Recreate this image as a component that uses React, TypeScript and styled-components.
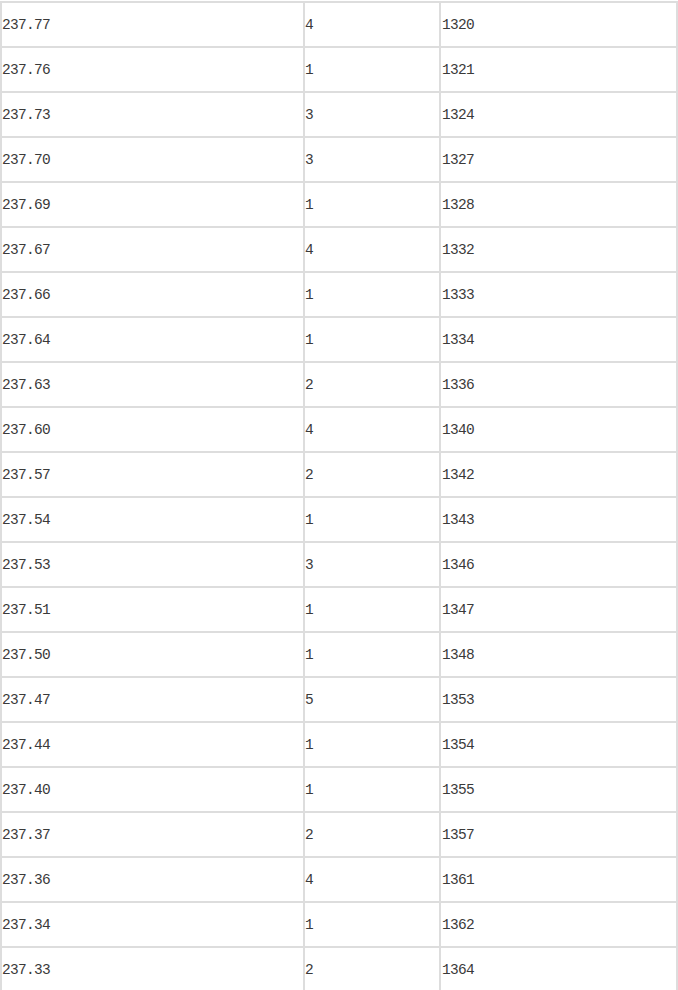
import React from "react";
import styled, { createGlobalStyle } from "styled-components";

const Global = createGlobalStyle`
  html, body {
    margin: 0;
    padding: 0;
    background: #ffffff;
    overflow: hidden;
  }
`;

const Table = styled.div`
  margin-top: 1px;
  width: 678px;
  display: grid;
  grid-template-columns: 301px 134px 235px;
  grid-auto-rows: 43px;
  gap: 2px;
  padding: 2px;
  box-sizing: border-box;
  background: #dddddd;
  font-family: "Liberation Mono", "DejaVu Sans Mono", monospace;
  font-size: 14.5px;
  letter-spacing: -0.7px;
  color: #3a3a3a;
`;

const Cell = styled.div<{ $shift?: number }>`
  background: #ffffff;
  display: flex;
  align-items: center;
  padding-left: ${(p) => p.$shift ?? 0}px;
  padding-top: 1px;
  white-space: nowrap;
`;

const rows: [string, number, number][] = [
  ["237.77", 4, 1320],
  ["237.76", 1, 1321],
  ["237.73", 3, 1324],
  ["237.70", 3, 1327],
  ["237.69", 1, 1328],
  ["237.67", 4, 1332],
  ["237.66", 1, 1333],
  ["237.64", 1, 1334],
  ["237.63", 2, 1336],
  ["237.60", 4, 1340],
  ["237.57", 2, 1342],
  ["237.54", 1, 1343],
  ["237.53", 3, 1346],
  ["237.51", 1, 1347],
  ["237.50", 1, 1348],
  ["237.47", 5, 1353],
  ["237.44", 1, 1354],
  ["237.40", 1, 1355],
  ["237.37", 2, 1357],
  ["237.36", 4, 1361],
  ["237.34", 1, 1362],
  ["237.33", 2, 1364],
];

export default function App() {
  return (
    <>
      <Global />
      <Table>
        {rows.map(([price, qty, total]) => (
          <React.Fragment key={price}>
            <Cell>{price}</Cell>
            <Cell>{qty}</Cell>
            <Cell $shift={1}>{total}</Cell>
          </React.Fragment>
        ))}
      </Table>
    </>
  );
}
